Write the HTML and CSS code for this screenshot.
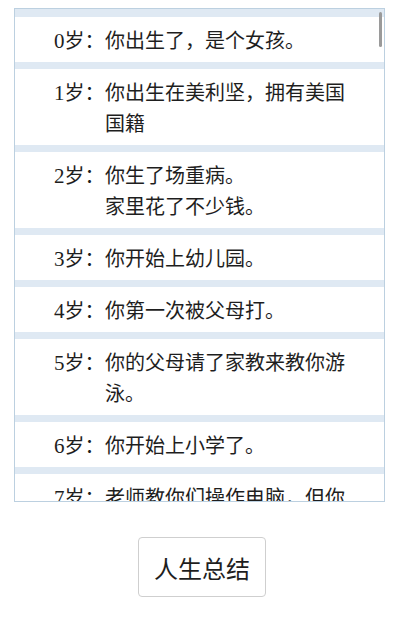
FILE: index.html
```html
<!DOCTYPE html>
<html lang="zh-CN">
<head>
<meta charset="utf-8">
<title>人生记录</title>
<link rel="stylesheet" href="styles.css">
</head>
<body>
<div class="log">
  <ul class="events">
    <li class="event"><span class="age"><span class="num">0</span>岁：</span><span class="desc">你出生了，是个女孩。</span></li>
    <li class="event"><span class="age"><span class="num">1</span>岁：</span><span class="desc">你出生在美利坚，拥有美国国籍</span></li>
    <li class="event"><span class="age"><span class="num">2</span>岁：</span><span class="desc">你生了场重病。<br>家里花了不少钱。</span></li>
    <li class="event"><span class="age"><span class="num">3</span>岁：</span><span class="desc">你开始上幼儿园。</span></li>
    <li class="event"><span class="age"><span class="num">4</span>岁：</span><span class="desc">你第一次被父母打。</span></li>
    <li class="event"><span class="age"><span class="num">5</span>岁：</span><span class="desc">你的父母请了家教来教你游泳。</span></li>
    <li class="event"><span class="age"><span class="num">6</span>岁：</span><span class="desc">你开始上小学了。</span></li>
    <li class="event"><span class="age"><span class="num">7</span>岁：</span><span class="desc">老师教你们操作电脑，但你学得很慢。</span></li>
  </ul>
  <div class="thumb"></div>
</div>
<div class="actions">
  <button class="summary">人生总结</button>
</div>
</body>
</html>
```
FILE: styles.css
```css
html, body {
  margin: 0;
  padding: 0;
  background: #ffffff;
}

body {
  width: 400px;
  height: 626px;
  overflow: hidden;
  font-family: "Noto Sans CJK SC", "Noto Sans", sans-serif;
  color: #1e1e1e;
}

.log {
  position: relative;
  margin: 8px 0 0 14px;
  width: 369px;
  height: 492px;
  border: 1px solid #bcd0e0;
  background-color: #dfe9f3;
  overflow: hidden;
}

.events {
  list-style: none;
  margin: 0;
  padding: 8px 0 0;
  display: flex;
  flex-direction: column;
  gap: 7px;
}

.event {
  display: flex;
  align-items: flex-start;
  background: #ffffff;
  padding: 7px 0 7px 39px;
  font-size: 20px;
  line-height: 31px;
}

.age {
  display: block;
  flex: 0 0 51px;
  height: 31px;
  white-space: nowrap;
}

.num {
  font-family: "Liberation Serif", serif;
  font-size: 21px;
  line-height: 1;
}

.desc {
  display: block;
  width: 250px;
}

.thumb {
  position: absolute;
  top: 3px;
  right: 2px;
  width: 3px;
  height: 35px;
  border-radius: 2px;
  background: #9a9a9a;
}

.actions {
  display: flex;
  justify-content: center;
  padding: 35px 0 0 4px;
}

.summary {
  width: 128px;
  height: 60px;
  border: 1px solid #cfcfcf;
  border-radius: 4px;
  background: #ffffff;
  color: #1e1e1e;
  font-family: "Noto Sans CJK SC", "Noto Sans", sans-serif;
  font-size: 24px;
  padding: 0;
}
```
